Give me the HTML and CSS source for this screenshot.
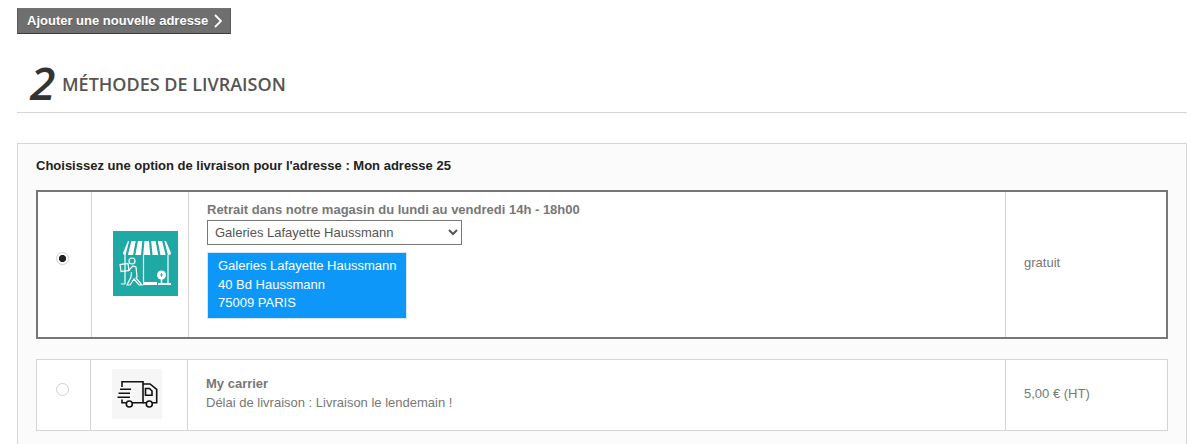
FILE: index.html
```html
<!DOCTYPE html>
<html lang="fr">
<head>
<meta charset="utf-8">
<title>Méthodes de livraison</title>
<link rel="stylesheet" href="styles.css">
</head>
<body>
<a class="btn" href="#">Ajouter une nouvelle adresse
  <svg class="chev" width="8" height="14" viewBox="0 0 8 14"><path d="M1 1l6 6-6 6" fill="none" stroke="#fff" stroke-width="1.8"/></svg>
</a>
<h1 class="step"><span class="num">2</span><span class="title">MÉTHODES DE LIVRAISON</span></h1>
<section class="panel">
  <p class="lead">Choisissez une option de livraison pour l'adresse : Mon adresse 25</p>
  <div class="row row-on">
    <div class="c c-radio"><span class="radio radio-on"></span></div>
    <div class="c c-logo">
      <svg class="logo" width="65" height="65" viewBox="0 0 65 65">
        <rect width="65" height="65" fill="#1fa9a5"/>
        <path d="M10 22l5-12h38l5 12q0 2-2 2H12q-2 0-2-2z" fill="#fff"/>
        <path d="M17.500 9l-4 16M24 9l-3 16M30.500 9l-1.500 16M37 9l1.500 16M43.500 9l3 16M50 9l4 16" stroke="#1fa9a5" stroke-width="2.200" fill="none"/>
        <g stroke="#fff" fill="none" stroke-width="1.200">
          <path d="M12 24v29M30.500 24v27M55 24v29M8 53h4"/>
          <rect x="7.500" y="33" width="8" height="7" transform="rotate(-8 11.500 36.500)"/>
          <circle cx="19" cy="30" r="3"/>
          <path d="M15 40l5-5 3 1 1 10-1 1 6 7h-3l-5-6-4 6h-3l4-8 .5-5"/>
        </g>
        <path d="M30 51h14v3H30zM45 52h13v2H45z" fill="#fff"/>
        <circle cx="48.500" cy="44" r="4.500" fill="#fff"/>
        <path d="M48.500 48v4" stroke="#fff" stroke-width="1.500"/>
        <path d="M48.500 42v4M47 44h3" stroke="#1fa9a5" stroke-width=".8"/>
      </svg>
    </div>
    <div class="c c-info">
      <strong class="name">Retrait dans notre magasin du lundi au vendredi 14h - 18h00</strong>
      <select class="store"><option>Galeries Lafayette Haussmann</option></select>
      <div class="addr">Galeries Lafayette Haussmann<br>40 Bd Haussmann<br>75009 PARIS</div>
    </div>
    <div class="c c-price">gratuit</div>
  </div>
  <div class="row">
    <div class="c c-radio"><span class="radio"></span></div>
    <div class="c c-logo">
      <svg class="logo" width="50" height="50" viewBox="0 0 50 50">
        <rect width="50" height="50" fill="#f6f6f6"/>
        <g fill="none" stroke="#111" stroke-width="1.600">
          <path d="M10 18v-5.300h21v21H20.500M10 30.500v3.200h4.300"/>
          <path d="M31 15h7l6.700 5.500v13.200h-4.400M34.300 33.700H31"/>
          <path d="M33.500 19.500h4l2.500 2.500v4.300h-6.500z"/>
          <path d="M8 20.300h11M6.500 24.300H18M5.500 28.300H18"/>
          <circle cx="17.300" cy="35" r="3"/>
          <circle cx="37.300" cy="35" r="3"/>
        </g>
      </svg>
    </div>
    <div class="c c-info c-info2">
      <strong class="name">My carrier</strong>
      <span>Délai de livraison : Livraison le lendemain !</span>
    </div>
    <div class="c c-price">5,00 € (HT)</div>
  </div>
</section>
</body>
</html>
```
FILE: styles.css
```css
* { box-sizing: border-box; }
html, body { margin: 0; height: 444px; overflow: hidden; background: #fff; }
body {
  padding: 8px 17px 0;
  font: 13px/18px "Liberation Sans", Arial, sans-serif;
  color: #777;
}
.btn {
  display: flex;
  align-items: center;
  gap: 6px;
  width: 214px;
  height: 26px;
  padding: 0 0 0 9px;
  background: #6f6f6f;
  border: 1px solid;
  border-color: #74716f #5c5a58 #3d3b3a #5c5a58;
  color: #fff;
  font-weight: 700;
  font-size: 13px;
  text-decoration: none;
  text-shadow: 0 1px #555;
}
.chev { flex: none; }
.step {
  display: flex;
  align-items: flex-end;
  height: 79px;
  margin: 0 0 30px;
  padding: 0 0 8px 13px;
  border-bottom: 1px solid #d6d4d4;
  font-weight: 400;
}
.num {
  font: italic 600 46px/44px "Open Sans", sans-serif;
  color: #333;
  width: 32px;
  display: block;
}
.title {
  font: 600 18px/24px "Open Sans", sans-serif;
  color: #555454;
  padding-bottom: 8px;
}
.panel {
  height: 320px;
  padding: 13px 18px 0;
  background: #fbfbfb;
  border: 1px solid #d6d4d4;
  border-bottom: 0;
}
.lead {
  margin: 0 0 15px;
  line-height: 18px;
  font-weight: 700;
  color: #222;
}
.row {
  display: flex;
  height: 72px;
  background: #fff;
  border: 1px solid #d6d4d4;
}
.row-on {
  height: 149px;
  margin-bottom: 20px;
  border: 2px solid #777;
}
.c { display: flex; align-items: center; }
.c + .c { border-left: 1px solid #d6d4d4; }
.c-radio { width: 53px; justify-content: center; padding: 0 3px 11px 0; }
.row-on .c-radio { padding: 0 4px 12px 0; }
.c-logo { width: 97px; justify-content: center; padding: 0 4px 3px 0; }
.row-on .c-logo { padding: 0 0 2px 11px; }
.logo { display: block; }
.c-info {
  flex: 1;
  flex-direction: column;
  align-items: flex-start;
  justify-content: center;
  padding-left: 18px;
  min-width: 0;
}
.row-on .c-info { justify-content: flex-start; padding: 9px 0 0 18px; }
.c-info2 { padding-bottom: 3px; }
.c-info2 .name { margin-bottom: 1px; }
.name { color: #777; font-weight: 700; line-height: 18px; }
.store {
  display: block;
  width: 255px;
  height: 25px;
  margin: 1px 0 7px;
  padding: 0 3px;
  background: #fff;
  border: 1px solid #777;
  border-radius: 0;
  color: #555;
  font: 13px "Liberation Sans", Arial, sans-serif;
}
.addr {
  width: 200px;
  height: 67px;
  padding: 4px 0 4px 10px;
  background: #0d98f9;
  border: 1px solid #d6e6f5;
  color: #fff;
  line-height: 18.500px;
  white-space: nowrap;
}
.c-price { width: 162px; padding-left: 18px; padding-bottom: 2px; }
.row-on .c-price { width: 161px; padding-bottom: 4px; }
.radio {
  display: block;
  width: 13px;
  height: 13px;
  border: 1px solid #cfcfcf;
  border-radius: 50%;
  background: #fff;
}
.radio-on {
  background: radial-gradient(circle, #222 3.300px, #fff 3.900px);
}
```
